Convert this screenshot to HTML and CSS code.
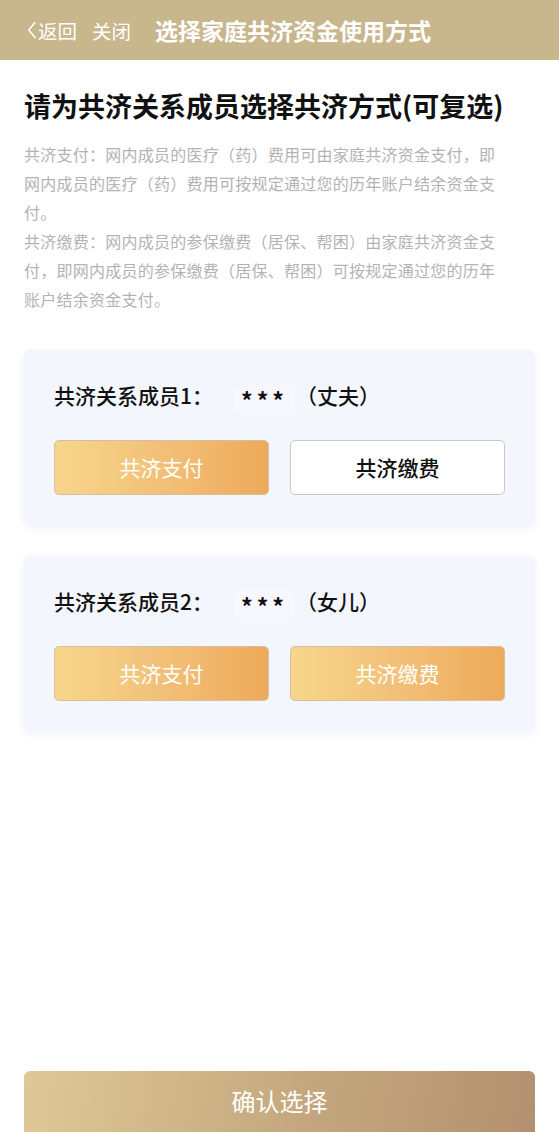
FILE: index.html
```
<!DOCTYPE html>
<html lang="zh-CN">
<head>
<meta charset="utf-8">
<link rel="stylesheet" href="styles.css">
</head>
<body>
<div class="page">
  <header class="nav">
    <div class="nav-left">
      <span class="back"><svg class="chev" viewBox="0 0 10 18" width="10" height="18"><path d="M8 1.5 L1.8 9 L8 16.5" fill="none" stroke="#fff" stroke-width="1.6" stroke-linecap="round" stroke-linejoin="round"/></svg>返回</span>
      <span class="close">关闭</span>
    </div>
    <div class="nav-title">选择家庭共济资金使用方式</div>
  </header>
  <main class="content">
    <h1 class="heading">请为共济关系成员选择共济方式(可复选)</h1>
    <div class="desc">
      <p>共济支付：网内成员的医疗（药）费用可由家庭共济资金支付，即网内成员的医疗（药）费用可按规定通过您的历年账户结余资金支付。</p>
      <p>共济缴费：网内成员的参保缴费（居保、帮困）由家庭共济资金支付，即网内成员的参保缴费（居保、帮困）可按规定通过您的历年账户结余资金支付。</p>
    </div>
    <section class="card">
      <div class="card-title">共济关系成员1：<span class="mask">***</span>（丈夫）</div>
      <div class="btns">
        <div class="opt on">共济支付</div>
        <div class="opt">共济缴费</div>
      </div>
    </section>
    <section class="card">
      <div class="card-title">共济关系成员2：<span class="mask">***</span>（女儿）</div>
      <div class="btns">
        <div class="opt on">共济支付</div>
        <div class="opt on">共济缴费</div>
      </div>
    </section>
  </main>
  <div class="footer">
    <div class="confirm">确认选择</div>
  </div>
</div>
</body>
</html>
```
FILE: styles.css
```
* { box-sizing: border-box; margin: 0; padding: 0; }
html, body { width: 559px; height: 1132px; overflow: hidden; background: #fff; }
body { font-family: "Noto Sans CJK SC", "Noto Sans", sans-serif; }
.page { display: flex; flex-direction: column; height: 1132px; }
.nav { height: 60px; background: #c8b68c; display: flex; align-items: center; padding-left: 27px; color: #fff; flex-shrink: 0; }
.nav-left { display: flex; align-items: center; font-size: 19.5px; gap: 15px; }
.back { display: flex; align-items: center; gap: 1px; }
.chev { display: block; }
.nav-title { margin-left: 24px; font-size: 23px; font-weight: 700; }
.content { padding: 28px 24px 0; flex: 1; }
.heading { font-size: 27px; font-weight: 700; color: #111; line-height: 36px; }
.desc { margin-top: 16px; color: #b3b3b3; font-size: 16px; letter-spacing: 0.25px; line-height: 28.8px; padding-right: 30px; }
.desc p + p { margin-top: 1px; }
.card { background: #f4f6fd; border-radius: 6px; box-shadow: 0 2px 10px rgba(0,0,0,0.06); padding: 29px 30px 31px; margin-top: 30px; }
.desc + .card { margin-top: 36px; }
.card-title { font-size: 21px; font-weight: 500; color: #111; line-height: 32px; height: 32px; white-space: nowrap; }
.mask { display: inline-block; font-size: 23px; font-weight: 700; letter-spacing: 4px; margin-left: 22px; margin-right: 2px; padding: 0 6px; line-height: 30px; vertical-align: -6px; background: #f7f8fe; border-radius: 8px; }
.btns { display: flex; gap: 21px; margin-top: 29px; }
.opt { flex: 1; height: 55px; border: 1px solid #c8c8c8; border-radius: 5px; background: #fff; display: flex; align-items: center; justify-content: center; font-size: 21px; font-weight: 500; color: #111; }
.opt.on { background: linear-gradient(90deg, #f7d68b 0%, #f2c078 50%, #eeaa5a 100%); color: #fff; border-color: #d6bfa0; font-weight: 400; }
.footer { padding: 0 24px; flex-shrink: 0; }
.confirm { height: 61px; border-radius: 6px 6px 0 0; background: linear-gradient(100deg, #dfc896 0%, #c4a77e 55%, #b39170 100%); color: #fff; font-size: 24px; font-weight: 400; display: flex; align-items: center; justify-content: center; padding-bottom: 2px; }
```
